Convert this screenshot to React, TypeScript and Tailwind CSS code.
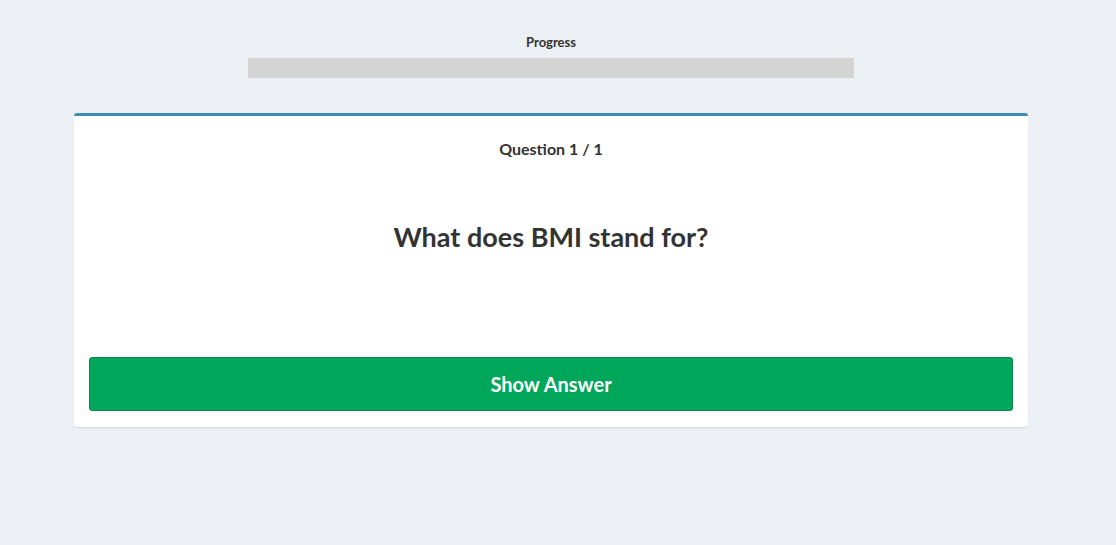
export default function App() {
  return (
    <div className="min-h-[545px] w-full bg-[#ecf0f5] font-['Lato',sans-serif] text-[#333]">
      <div className="w-[1102px] pt-[33px]">
        <div className="mx-auto flex w-[606px] flex-col items-center">
          <div className="text-[13px] font-bold leading-[18px]">Progress</div>
          <div className="mt-[7px] h-5 w-full bg-[#d4d4d4]" />
        </div>

        <div className="mx-auto mt-[35px] w-[954px] rounded-[3px] border-t-[3px] border-[#3c8dbc] bg-white px-[15px] pb-4 shadow-[0_1px_1px_rgba(0,0,0,0.1)]">
          <div className="pt-[21px] text-center text-[16px] font-bold leading-[24px]">Question 1 / 1</div>
          <div className="mt-[59px] text-center text-[27px] font-bold leading-[34px]">What does BMI stand for?</div>
          <button className="mt-[103px] flex h-[54px] w-full items-center justify-center rounded-[3px] border border-[#008d4c] bg-[#00a65a] text-[20px] font-bold text-white">
            Show Answer
          </button>
        </div>
      </div>
    </div>
  )
}
